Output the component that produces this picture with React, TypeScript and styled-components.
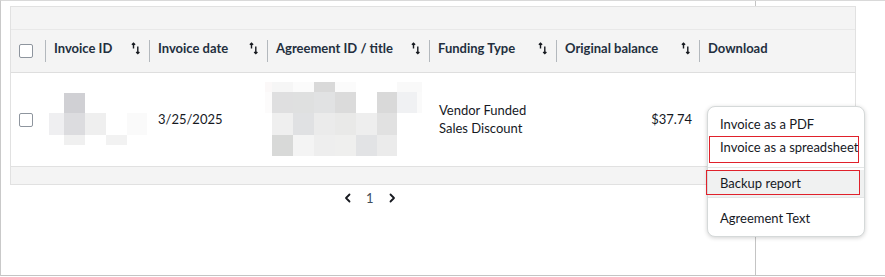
import React from 'react';
import styled, { createGlobalStyle } from 'styled-components';

const GlobalStyle = createGlobalStyle`
  html, body {
    margin: 0;
    padding: 0;
    background: #ffffff;
  }
  body {
    font-family: Lato, 'Open Sans', sans-serif;
    color: #16191f;
  }
`;

type Cell = [number, number, number, number, string];

const invoiceBlur: Cell[] = [
  [15, 1, 21, 21, '#d0d0d4'],
  [0, 21, 15, 22, '#efeff1'],
  [15, 21, 21, 22, '#dcdcdf'],
  [36, 21, 21, 22, '#efefef'],
  [78, 21, 20, 22, '#fafafa'],
  [15, 43, 21, 10, '#f0f0f0'],
  [57, 43, 21, 10, '#f2f2f2'],
];

const agreementBlur: Cell[] = [
  [0, 0, 7, 10, '#fbf8f8'],
  [7, 0, 21, 10, '#f6f6f6'],
  [28, 0, 21, 10, '#fbfbfb'],
  [49, 0, 21, 10, '#d9d9d9'],
  [70, 0, 21, 10, '#fbfbfb'],
  [132, 0, 25, 10, '#f9f9f9'],
  [0, 10, 7, 21, '#fcfbfb'],
  [7, 10, 21, 21, '#dfdfe0'],
  [28, 10, 21, 21, '#dfe0e0'],
  [49, 10, 21, 21, '#e1e2e3'],
  [70, 10, 21, 21, '#dbdbdb'],
  [112, 10, 20, 21, '#d9d9d9'],
  [132, 10, 20, 21, '#f0f1f3'],
  [152, 10, 5, 21, '#fafafa'],
  [7, 31, 21, 22, '#efefef'],
  [28, 31, 21, 22, '#e0e1e3'],
  [49, 31, 21, 22, '#ebebeb'],
  [70, 31, 21, 22, '#e9e9e8'],
  [91, 31, 21, 22, '#eeeeee'],
  [112, 31, 20, 22, '#e1e1e1'],
  [7, 53, 21, 21, '#d8d9d8'],
  [28, 53, 21, 21, '#f4f4f4'],
  [49, 53, 21, 21, '#eeeeee'],
  [70, 53, 21, 21, '#efefee'],
  [91, 53, 21, 21, '#e2e3e5'],
  [112, 53, 20, 21, '#ebebeb'],
];

const Redacted: React.FC<{ cells: Cell[]; width: number; height: number }> = ({ cells, width, height }) => (
  <svg width={width} height={height} viewBox={`0 0 ${width} ${height}`}>
    {cells.map(([x, y, w, h, c], i) => (
      <rect key={i} x={x} y={y} width={w} height={h} fill={c} />
    ))}
  </svg>
);

const SortIcon = () => (
  <svg width="10" height="13" viewBox="0 0 10 13" fill="none" stroke="#16191f" strokeWidth="1.4">
    <path d="M2.5 1.2 V6.5 M0.9 2.8 L2.5 1.2 L4.1 2.8" />
    <path d="M6.8 4.5 V11.6 M5.2 10 L6.8 11.6 L8.4 10" />
  </svg>
);

const Chevron: React.FC<{ dir: 'left' | 'right' }> = ({ dir }) => (
  <svg width="8" height="10" viewBox="0 0 8 10" fill="none" stroke="#16191f" strokeWidth="1.8" strokeLinecap="round" strokeLinejoin="round">
    {dir === 'left' ? <path d="M5.5 1.5 L2 5 L5.5 8.5" /> : <path d="M2.5 1.5 L6 5 L2.5 8.5" />}
  </svg>
);

const columns = [
  { title: 'Invoice ID', sortable: true },
  { title: 'Invoice date', sortable: true },
  { title: 'Agreement ID / title', sortable: true },
  { title: 'Funding Type', sortable: true },
  { title: 'Original balance', sortable: true },
  { title: 'Download', sortable: false },
];

export default function App() {
  return (
    <>
      <GlobalStyle />
      <Frame>
        <TableBox>
          <TopBand />
          <HeaderRow>
            <CheckCell>
              <Checkbox />
            </CheckCell>
            {columns.map((col) => (
              <HeaderCell key={col.title}>
                <Sep />
                <HeaderLabel>{col.title}</HeaderLabel>
                {col.sortable && (
                  <SortSlot>
                    <SortIcon />
                  </SortSlot>
                )}
              </HeaderCell>
            ))}
          </HeaderRow>
          <BodyRow>
            <CheckCell>
              <Checkbox />
            </CheckCell>
            <BodyCell $pad="4px">
              <Redacted cells={invoiceBlur} width={98} height={53} />
            </BodyCell>
            <BodyCell $pad="9px">3/25/2025</BodyCell>
            <BodyCell $pad="0" $shift="-2px">
              <Redacted cells={agreementBlur} width={157} height={74} />
            </BodyCell>
            <BodyCell $pad="10px">
              <TwoLine>
                Vendor Funded
                <br />
                Sales Discount
              </TwoLine>
            </BodyCell>
            <BodyCell $pad="0" $right>
              $37.74
            </BodyCell>
            <BodyCell $pad="9px" />
          </BodyRow>
          <FootBand />
        </TableBox>
        <Pager>
          <PagerButton>
            <Chevron dir="left" />
          </PagerButton>
          <PageNumber>1</PageNumber>
          <PagerButton>
            <Chevron dir="right" />
          </PagerButton>
        </Pager>

        <Menu>
          <MenuGroup $top="5px" $bottom="4px">
            <MenuItem $h="24px">Invoice as a PDF</MenuItem>
            <MenuItem $h="27px" $lh="22px" $marked>
              Invoice as a spreadsheet
            </MenuItem>
          </MenuGroup>
          <MenuDivider />
          <MenuGroup $top="2px" $bottom="0">
            <MenuItem $h="27px" $active $marked $wide>
              Backup report
            </MenuItem>
          </MenuGroup>
          <MenuDivider />
          <MenuGroup $top="8px" $bottom="0">
            <MenuItem $h="24px">Agreement Text</MenuItem>
          </MenuGroup>
        </Menu>
      </Frame>
    </>
  );
}

const GRID = '34px 104px 118px 162px 127px 143px 1fr';

const Frame = styled.div`
  position: relative;
  box-sizing: border-box;
  width: 885px;
  height: 276px;
  padding: 5px 0 0 9px;
  border-top: 1px solid #d9d9d9;
  border-left: 1px solid #c9c9c9;
  border-bottom: 1px solid #c4c4c4;
  background: linear-gradient(
    to right,
    transparent 754px,
    #c4c4c4 754px,
    #c4c4c4 755px,
    transparent 755px
  );
`;

const TableBox = styled.div`
  box-sizing: border-box;
  width: 846px;
  border: 1px solid #e1e1e1;
  background: #ffffff;
`;

const TopBand = styled.div`
  height: 22px;
  background: #f4f4f4;
  border-bottom: 1px solid #e8e8e8;
`;

const HeaderRow = styled.div`
  display: grid;
  grid-template-columns: ${GRID};
  height: 42px;
  background: #f4f4f4;
  border-bottom: 1px solid #dedede;
`;

const CheckCell = styled.div`
  display: flex;
  align-items: center;
  padding-left: 8px;
`;

const Checkbox = styled.span`
  box-sizing: border-box;
  width: 14px;
  height: 14px;
  border: 1px solid #8e959e;
  border-radius: 2px;
  background: #ffffff;
`;

const HeaderCell = styled.div`
  display: flex;
  align-items: center;
  min-width: 0;
`;

const Sep = styled.span`
  width: 1px;
  height: 22px;
  background: #b3b8bd;
`;

const HeaderLabel = styled.span`
  position: relative;
  top: -3px;
  margin-left: 8px;
  font-size: 13px;
  font-weight: 700;
  color: #232f3e;
  white-space: nowrap;
`;

const SortSlot = styled.span`
  position: relative;
  top: -3px;
  display: flex;
  margin-left: auto;
  margin-right: 8px;
`;

const BodyRow = styled.div`
  display: grid;
  grid-template-columns: ${GRID};
  height: 93px;
  border-bottom: 1px solid #e1e1e1;
`;

const BodyCell = styled.div<{ $pad: string; $right?: boolean; $shift?: string }>`
  display: flex;
  align-items: center;
  justify-content: ${({ $right }) => ($right ? 'flex-end' : 'flex-start')};
  padding-left: ${({ $pad, $right }) => ($right ? '0' : $pad)};
  padding-right: ${({ $right }) => ($right ? '7px' : '0')};
  margin-left: ${({ $shift }) => $shift || '0'};
  padding-bottom: 2px;
  font-size: 13px;
  color: #16191f;
`;

const TwoLine = styled.div`
  line-height: 18px;
`;

const FootBand = styled.div`
  height: 17px;
  background: #f4f4f4;
`;

const Pager = styled.div`
  display: flex;
  align-items: center;
  height: 26px;
  padding-left: 334px;
  gap: 10px;
`;

const PagerButton = styled.span`
  display: flex;
  align-items: center;
`;

const PageNumber = styled.span`
  font-size: 13px;
  color: #414d5c;
  padding: 0 4px;
`;

const Menu = styled.div`
  position: absolute;
  left: 706px;
  top: 105px;
  box-sizing: border-box;
  width: 158px;
  height: 131px;
  background: #ffffff;
  border: 1px solid #d5d9d9;
  border-radius: 8px;
  box-shadow: 0 1px 4px rgba(0, 0, 0, 0.18);
`;

const MenuGroup = styled.div<{ $top: string; $bottom: string }>`
  padding-top: ${({ $top }) => $top};
  padding-bottom: ${({ $bottom }) => $bottom};
`;

const MenuDivider = styled.div`
  height: 1px;
  background: #e3e6e6;
`;

const MenuItem = styled.div<{ $h: string; $lh?: string; $active?: boolean; $marked?: boolean; $wide?: boolean }>`
  position: relative;
  box-sizing: border-box;
  height: ${({ $h }) => $h};
  line-height: ${({ $lh, $h }) => $lh || $h};
  padding-left: 12px;
  font-size: 13px;
  color: #16191f;
  white-space: nowrap;
  background: ${({ $active }) => ($active ? '#f0f1f1' : 'transparent')};

  &::after {
    content: '';
    display: ${({ $marked }) => ($marked ? 'block' : 'none')};
    position: absolute;
    top: 0;
    bottom: ${({ $wide }) => ($wide ? '2px' : '0')};
    left: ${({ $wide }) => ($wide ? '-2px' : '1px')};
    right: ${({ $wide }) => ($wide ? '4px' : '5px')};
    border: 1px solid #e0212b;
  }
`;
